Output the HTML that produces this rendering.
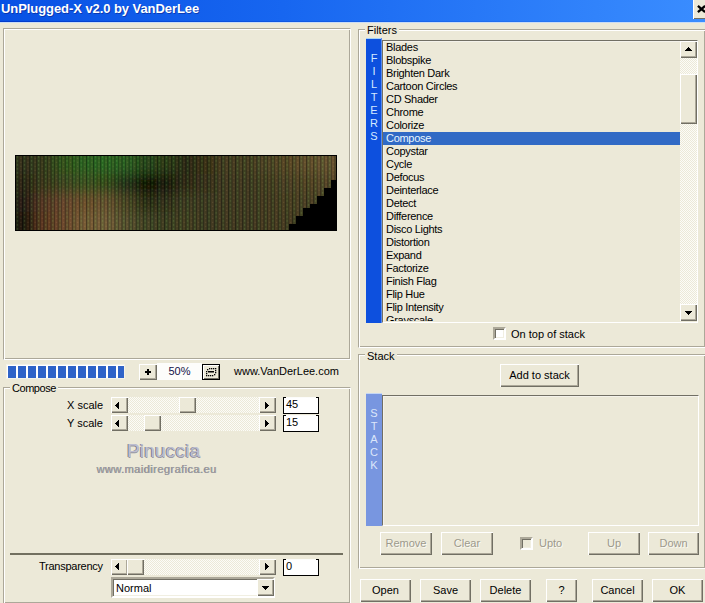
<!DOCTYPE html>
<html><head><meta charset="utf-8"><title>UnPlugged-X</title>
<style>
html,body{margin:0;padding:0}
body{width:705px;height:603px;overflow:hidden;position:relative;background:#ECE9D8;font-family:"Liberation Sans",sans-serif;font-size:11px;color:#000}
body div, body svg{position:absolute}
.t{white-space:nowrap;line-height:13px;font-size:11px}
.tt{white-space:nowrap;font-weight:bold;font-size:13px;line-height:16px;color:#fff;text-shadow:1px 1px rgba(10,30,130,.55)}
.etch{border:1px solid;border-color:#ACA899 #fff #fff #ACA899;box-shadow:inset 1px 1px #fff, inset -1px -1px #ACA899}
.btn{box-sizing:border-box;background:#ECE9D8;box-shadow:inset 1px 1px #fff, inset -1px -1px #716F64, inset -2px -2px #ACA899;text-align:center;white-space:nowrap;font-size:11px}
.lf{border:1px solid;border-color:#716F64 #fff #fff #716F64;box-shadow:inset 1px 1px #F4F2EA}
.sunk{border:2px solid;border-color:#ACA899 #fff #fff #ACA899;box-shadow:inset 1px 1px #716F64, inset -1px -1px #F1EFE2}
.dis{color:#9C998C;text-shadow:1px 1px #FAF9F3}
</style></head><body>
<div style="left:0;top:0;width:705px;height:22px;background:linear-gradient(90deg,#0851E4 0%,#1766F0 40%,#3A8DFF 100%)"></div>
<div style="left:0;top:21px;width:705px;height:1px;background:linear-gradient(90deg,rgba(0,50,190,.7),rgba(0,60,200,.35) 40%,rgba(40,120,240,0))"></div>
<div style="left:0;top:22px;width:705px;height:1px;background:#C9DCF5"></div>
<div class="tt" style="left:1px;top:1px;letter-spacing:-0.07px">UnPlugged-X v2.0 by VanDerLee</div>
<div style="left:693px;top:0;width:12px;height:19px;background:#ECE9D8;box-shadow:inset 1px 0 #fff, inset 0 -1px #716F64"></div>
<svg style="left:697px;top:5px;width:9px;height:8px" viewBox="0 0 9 8"><path d="M0.9 0.9 L8.1 7.1 M8.1 0.9 L0.9 7.1" stroke="#000" stroke-width="2.3"/></svg>
<div class="etch" style="left:3px;top:28px;width:346px;height:330px"></div>
<svg style="left:15px;top:155px;width:322px;height:76px" viewBox="0 0 322 76"><defs><filter id="b1" x="-20%" y="-50%" width="140%" height="200%"><feGaussianBlur stdDeviation="6"/></filter><pattern id="st" width="7.1" height="4" patternUnits="userSpaceOnUse">
<rect x="0" y="0" width="1.1" height="4" fill="#000" fill-opacity="0.4"/>
<rect x="1.1" y="0" width="2.4" height="4" fill="#2a6a20" fill-opacity="0.12"/>
<rect x="1.7" y="1.2" width="1.2" height="1.4" fill="#b0e080" fill-opacity="0.18"/>
<rect x="3.5" y="0" width="0.9" height="4" fill="#000" fill-opacity="0.3"/>
<rect x="4.4" y="0" width="2.7" height="4" fill="#7a3a1a" fill-opacity="0.1"/>
<rect x="5.3" y="2.8" width="1.2" height="1.2" fill="#ffd0a0" fill-opacity="0.1"/>
</pattern></defs><g filter="url(#b1)"><rect x="-30.0" y="-30.0" width="50.6" height="49.5" fill="#32321a"/><rect x="20.1" y="-30.0" width="20.6" height="49.5" fill="#363e1c"/><rect x="40.2" y="-30.0" width="20.6" height="49.5" fill="#305a1e"/><rect x="60.4" y="-30.0" width="20.6" height="49.5" fill="#2c6620"/><rect x="80.5" y="-30.0" width="20.6" height="49.5" fill="#2c6a20"/><rect x="100.6" y="-30.0" width="20.6" height="49.5" fill="#2a6420"/><rect x="120.8" y="-30.0" width="20.6" height="49.5" fill="#284a1a"/><rect x="140.9" y="-30.0" width="20.6" height="49.5" fill="#2a3e16"/><rect x="161.0" y="-30.0" width="20.6" height="49.5" fill="#2a2c14"/><rect x="181.1" y="-30.0" width="20.6" height="49.5" fill="#393316"/><rect x="201.2" y="-30.0" width="20.6" height="49.5" fill="#443d21"/><rect x="221.4" y="-30.0" width="20.6" height="49.5" fill="#454124"/><rect x="241.5" y="-30.0" width="20.6" height="49.5" fill="#4f4626"/><rect x="261.6" y="-30.0" width="20.6" height="49.5" fill="#584a28"/><rect x="281.8" y="-30.0" width="20.6" height="49.5" fill="#63522e"/><rect x="301.9" y="-30.0" width="50.6" height="49.5" fill="#685631"/><rect x="-30.0" y="19.0" width="50.6" height="19.5" fill="#2a2614"/><rect x="20.1" y="19.0" width="20.6" height="19.5" fill="#3a3a1e"/><rect x="40.2" y="19.0" width="20.6" height="19.5" fill="#3e4a20"/><rect x="60.4" y="19.0" width="20.6" height="19.5" fill="#3a5420"/><rect x="80.5" y="19.0" width="20.6" height="19.5" fill="#34501e"/><rect x="100.6" y="19.0" width="20.6" height="19.5" fill="#22321a"/><rect x="120.8" y="19.0" width="20.6" height="19.5" fill="#0c0a04"/><rect x="140.9" y="19.0" width="20.6" height="19.5" fill="#16160a"/><rect x="161.0" y="19.0" width="20.6" height="19.5" fill="#2e2a16"/><rect x="181.1" y="19.0" width="20.6" height="19.5" fill="#37331d"/><rect x="201.2" y="19.0" width="20.6" height="19.5" fill="#403b21"/><rect x="221.4" y="19.0" width="20.6" height="19.5" fill="#403b21"/><rect x="241.5" y="19.0" width="20.6" height="19.5" fill="#453f22"/><rect x="261.6" y="19.0" width="20.6" height="19.5" fill="#4b4226"/><rect x="281.8" y="19.0" width="20.6" height="19.5" fill="#524628"/><rect x="301.9" y="19.0" width="50.6" height="19.5" fill="#564a2a"/><rect x="-30.0" y="38.0" width="50.6" height="19.5" fill="#261e12"/><rect x="20.1" y="38.0" width="20.6" height="19.5" fill="#5a3a26"/><rect x="40.2" y="38.0" width="20.6" height="19.5" fill="#6a4a2e"/><rect x="60.4" y="38.0" width="20.6" height="19.5" fill="#70522e"/><rect x="80.5" y="38.0" width="20.6" height="19.5" fill="#6a5430"/><rect x="100.6" y="38.0" width="20.6" height="19.5" fill="#4e4a28"/><rect x="120.8" y="38.0" width="20.6" height="19.5" fill="#2c2e18"/><rect x="140.9" y="38.0" width="20.6" height="19.5" fill="#30321a"/><rect x="161.0" y="38.0" width="20.6" height="19.5" fill="#3e3c22"/><rect x="181.1" y="38.0" width="20.6" height="19.5" fill="#3e3b21"/><rect x="201.2" y="38.0" width="20.6" height="19.5" fill="#403b21"/><rect x="221.4" y="38.0" width="20.6" height="19.5" fill="#403b21"/><rect x="241.5" y="38.0" width="20.6" height="19.5" fill="#443d22"/><rect x="261.6" y="38.0" width="20.6" height="19.5" fill="#474124"/><rect x="281.8" y="38.0" width="20.6" height="19.5" fill="#4b4226"/><rect x="301.9" y="38.0" width="50.6" height="19.5" fill="#4b4226"/><rect x="-30.0" y="57.0" width="50.6" height="49.5" fill="#1c160e"/><rect x="20.1" y="57.0" width="20.6" height="49.5" fill="#5e3a24"/><rect x="40.2" y="57.0" width="20.6" height="49.5" fill="#6e4c2e"/><rect x="60.4" y="57.0" width="20.6" height="49.5" fill="#7a6038"/><rect x="80.5" y="57.0" width="20.6" height="49.5" fill="#76623a"/><rect x="100.6" y="57.0" width="20.6" height="49.5" fill="#5a5430"/><rect x="120.8" y="57.0" width="20.6" height="49.5" fill="#424426"/><rect x="140.9" y="57.0" width="20.6" height="49.5" fill="#3e4024"/><rect x="161.0" y="57.0" width="20.6" height="49.5" fill="#424024"/><rect x="181.1" y="57.0" width="20.6" height="49.5" fill="#3e3b21"/><rect x="201.2" y="57.0" width="20.6" height="49.5" fill="#403b21"/><rect x="221.4" y="57.0" width="20.6" height="49.5" fill="#403b21"/><rect x="241.5" y="57.0" width="20.6" height="49.5" fill="#443d22"/><rect x="261.6" y="57.0" width="20.6" height="49.5" fill="#443d22"/><rect x="281.8" y="57.0" width="20.6" height="49.5" fill="#443d22"/><rect x="301.9" y="57.0" width="50.6" height="49.5" fill="#443d22"/></g><rect x="0" y="0" width="322" height="76" fill="url(#st)"/><polygon points="274,75 274,69 281,69 281,61 288,61 288,53 295,53 295,49 302,49 302,41 309,41 309,33 316,33 316,25 321,25 321,75" fill="#000"/><rect x="0.5" y="0.5" width="321" height="75" fill="none" stroke="#000"/></svg>
<div style="left:6px;top:364px;width:119px;height:15px;background:#fff;box-shadow:inset 0 0 0 1px #F4F2E8"></div>
<div style="left:8px;top:366px;width:8px;height:12px;background:#2F63C8"></div>
<div style="left:18px;top:366px;width:8px;height:12px;background:#2F63C8"></div>
<div style="left:28px;top:366px;width:8px;height:12px;background:#2F63C8"></div>
<div style="left:38px;top:366px;width:8px;height:12px;background:#2F63C8"></div>
<div style="left:48px;top:366px;width:8px;height:12px;background:#2F63C8"></div>
<div style="left:58px;top:366px;width:8px;height:12px;background:#2F63C8"></div>
<div style="left:68px;top:366px;width:8px;height:12px;background:#2F63C8"></div>
<div style="left:78px;top:366px;width:8px;height:12px;background:#2F63C8"></div>
<div style="left:88px;top:366px;width:8px;height:12px;background:#2F63C8"></div>
<div style="left:98px;top:366px;width:8px;height:12px;background:#2F63C8"></div>
<div style="left:108px;top:366px;width:8px;height:12px;background:#2F63C8"></div>
<div style="left:118px;top:366px;width:6px;height:12px;background:#2F63C8"></div>
<div class="btn" style="left:139px;top:364px;width:18px;height:16px;line-height:16px;"></div>
<div style="left:145px;top:371px;width:6px;height:2px;background:#000"></div>
<div style="left:147px;top:369px;width:2px;height:6px;background:#000"></div>
<div style="left:157px;top:363px;width:45px;height:17px;background:#FDFDFB"></div>
<div class="t" style="left:157px;top:365px;width:45px;text-align:center;color:#121248">50%</div>
<div style="left:202px;top:364px;width:18px;height:16px;box-sizing:border-box;border:1px solid #000;background:#ECE9D8;box-shadow:inset 1px 1px #fff, inset -1px -1px #716F64"></div>
<svg style="left:202px;top:364px;width:18px;height:16px" viewBox="0 0 18 16"><g fill="#000"><rect x="7" y="4" width="1.3" height="1.3"/><rect x="9" y="4" width="1.3" height="1.3"/><rect x="11" y="4" width="1.3" height="1.3"/><rect x="13" y="4" width="1.3" height="1.3"/><rect x="5" y="5" width="1.3" height="1.3"/><rect x="4" y="7" width="1.3" height="1.3"/><rect x="4" y="9" width="1.3" height="1.3"/><rect x="4" y="11" width="1.3" height="1.3"/><rect x="6" y="11" width="1.3" height="1.3"/><rect x="8" y="11" width="1.3" height="1.3"/><rect x="10" y="11" width="1.3" height="1.3"/><rect x="12" y="10" width="1.3" height="1.3"/><rect x="13" y="6" width="1.3" height="1.3"/><rect x="13" y="8" width="1.3" height="1.3"/><rect x="6" y="7" width="6" height="1.5"/></g></svg>
<div class="t" style="left:234px;top:365px;">www.VanDerLee.com</div>
<div class="etch" style="left:3px;top:387px;width:346px;height:215px"></div>
<div class="t" style="left:10px;top:382px;padding:0 2px;background:#ECE9D8;letter-spacing:-0.45px">Compose</div>
<div class="t" style="left:67px;top:399px;">X scale</div>
<div class="t" style="left:67px;top:417px;">Y scale</div>
<div style="left:128px;top:397px;width:131px;height:16px;background-color:#F5F4EE;background-image:repeating-conic-gradient(#ECE9D8 0 25%, #FCFCF8 0 50%);background-size:2px 2px"></div>
<div class="btn" style="left:111px;top:397px;width:17px;height:16px;line-height:16px;"></div>
<svg style="left:115px;top:402px;width:4px;height:7px" viewBox="0 0 4 7" shape-rendering="crispEdges"><g fill="#000"><rect x="0" y="3" width="1" height="1"/><rect x="1" y="2" width="1" height="3"/><rect x="2" y="1" width="1" height="5"/><rect x="3" y="0" width="1" height="7"/></g></svg>
<div class="btn" style="left:259px;top:397px;width:17px;height:16px;line-height:16px;"></div>
<svg style="left:265px;top:402px;width:4px;height:7px" viewBox="0 0 4 7" shape-rendering="crispEdges"><g fill="#000"><rect x="3" y="3" width="1" height="1"/><rect x="2" y="2" width="1" height="3"/><rect x="1" y="1" width="1" height="5"/><rect x="0" y="0" width="1" height="7"/></g></svg>
<div class="btn" style="left:179px;top:397px;width:17px;height:16px;line-height:16px;"></div>
<div style="left:283px;top:397px;width:34px;height:15px;border:1px solid #000;border-top:1px solid #FCFCFA;background:#fff"></div>
<div style="left:283px;top:397px;width:3px;height:1px;background:#000"></div>
<div style="left:316px;top:397px;width:3px;height:1px;background:#000"></div>
<div class="t" style="left:286px;top:398px">45</div>
<div style="left:128px;top:415px;width:131px;height:16px;background-color:#F5F4EE;background-image:repeating-conic-gradient(#ECE9D8 0 25%, #FCFCF8 0 50%);background-size:2px 2px"></div>
<div class="btn" style="left:111px;top:415px;width:17px;height:16px;line-height:16px;"></div>
<svg style="left:115px;top:420px;width:4px;height:7px" viewBox="0 0 4 7" shape-rendering="crispEdges"><g fill="#000"><rect x="0" y="3" width="1" height="1"/><rect x="1" y="2" width="1" height="3"/><rect x="2" y="1" width="1" height="5"/><rect x="3" y="0" width="1" height="7"/></g></svg>
<div class="btn" style="left:259px;top:415px;width:17px;height:16px;line-height:16px;"></div>
<svg style="left:265px;top:420px;width:4px;height:7px" viewBox="0 0 4 7" shape-rendering="crispEdges"><g fill="#000"><rect x="3" y="3" width="1" height="1"/><rect x="2" y="2" width="1" height="3"/><rect x="1" y="1" width="1" height="5"/><rect x="0" y="0" width="1" height="7"/></g></svg>
<div class="btn" style="left:144px;top:415px;width:17px;height:16px;line-height:16px;"></div>
<div style="left:283px;top:415px;width:34px;height:15px;border:1px solid #000;border-top:1px solid #FCFCFA;background:#fff"></div>
<div style="left:283px;top:415px;width:3px;height:1px;background:#000"></div>
<div style="left:316px;top:415px;width:3px;height:1px;background:#000"></div>
<div class="t" style="left:286px;top:416px">15</div>
<div class="t" style="left:127px;top:440px;font-size:19px;line-height:22px;letter-spacing:0.2px;color:#BDBDD0;text-shadow:-1px 0 #7E7E88, 0 0.5px #9A9AA4">Pinuccia</div>
<div class="t" style="left:97px;top:463px;font-size:11px;line-height:13px;letter-spacing:0.45px;color:#A2A2A6;text-shadow:-0.6px 0.4px #7A7A80">www.maidiregrafica.eu</div>
<div style="left:10px;top:553px;width:333px;height:2px;background:#727060"></div>
<div class="t" style="left:39px;top:560px;letter-spacing:-0.25px">Transparency</div>
<div style="left:128px;top:559px;width:131px;height:16px;background-color:#F5F4EE;background-image:repeating-conic-gradient(#ECE9D8 0 25%, #FCFCF8 0 50%);background-size:2px 2px"></div>
<div class="btn" style="left:111px;top:559px;width:17px;height:16px;line-height:16px;"></div>
<svg style="left:115px;top:563px;width:4px;height:7px" viewBox="0 0 4 7" shape-rendering="crispEdges"><g fill="#000"><rect x="0" y="3" width="1" height="1"/><rect x="1" y="2" width="1" height="3"/><rect x="2" y="1" width="1" height="5"/><rect x="3" y="0" width="1" height="7"/></g></svg>
<div class="btn" style="left:127px;top:559px;width:17px;height:16px;line-height:16px;"></div>
<div class="btn" style="left:259px;top:559px;width:17px;height:16px;line-height:16px;"></div>
<svg style="left:265px;top:563px;width:4px;height:7px" viewBox="0 0 4 7" shape-rendering="crispEdges"><g fill="#000"><rect x="3" y="3" width="1" height="1"/><rect x="2" y="2" width="1" height="3"/><rect x="1" y="1" width="1" height="5"/><rect x="0" y="0" width="1" height="7"/></g></svg>
<div style="left:283px;top:559px;width:34px;height:15px;border:1px solid #000;border-top:1px solid #FCFCFA;background:#fff"></div>
<div style="left:283px;top:559px;width:3px;height:1px;background:#000"></div>
<div style="left:316px;top:559px;width:3px;height:1px;background:#000"></div>
<div class="t" style="left:286px;top:560px">0</div>
<div class="sunk" style="left:111px;top:577px;width:160px;height:17px;background:#fff"></div>
<div class="btn" style="left:257px;top:579px;width:17px;height:17px;line-height:17px;"></div>
<svg style="left:262px;top:586px;width:7px;height:4px" viewBox="0 0 7 4" shape-rendering="crispEdges"><g fill="#000"><rect x="3" y="3" width="1" height="1"/><rect x="2" y="2" width="3" height="1"/><rect x="1" y="1" width="5" height="1"/><rect x="0" y="0" width="7" height="1"/></g></svg>
<div class="t" style="left:116px;top:582px;">Normal</div>
<div class="etch" style="left:358px;top:29px;width:346px;height:317px"></div>
<div class="t" style="left:365px;top:24px;padding:0 2px;background:#ECE9D8">Filters</div>
<div style="left:366px;top:38px;width:16px;height:285px;background:#0D50DE;box-shadow:inset -1px 0 #5A8CEB, inset 0 1px #A6D2F6"></div>
<div class="t" style="left:366px;top:52px;width:16px;text-align:center;color:#D4EAFF">F</div>
<div class="t" style="left:366px;top:65px;width:16px;text-align:center;color:#D4EAFF">I</div>
<div class="t" style="left:366px;top:78px;width:16px;text-align:center;color:#D4EAFF">L</div>
<div class="t" style="left:366px;top:91px;width:16px;text-align:center;color:#D4EAFF">T</div>
<div class="t" style="left:366px;top:104px;width:16px;text-align:center;color:#D4EAFF">E</div>
<div class="t" style="left:366px;top:117px;width:16px;text-align:center;color:#D4EAFF">R</div>
<div class="t" style="left:366px;top:130px;width:16px;text-align:center;color:#D4EAFF">S</div>
<div class="lf" style="left:382px;top:40px;width:314px;height:281px"></div>
<div style="left:383px;top:41px;width:297px;height:280px;overflow:hidden;letter-spacing:-0.3px"><div class="t" style="left:3px;top:0px">Blades</div><div class="t" style="left:3px;top:13px">Blobspike</div><div class="t" style="left:3px;top:26px">Brighten Dark</div><div class="t" style="left:3px;top:39px">Cartoon Circles</div><div class="t" style="left:3px;top:52px">CD Shader</div><div class="t" style="left:3px;top:65px">Chrome</div><div class="t" style="left:3px;top:78px">Colorize</div><div class="t" style="left:0px;top:91px;width:294px;height:13px;background:#316AC5;color:#E8F6FF;padding-left:3px">Compose</div><div class="t" style="left:3px;top:104px">Copystar</div><div class="t" style="left:3px;top:117px">Cycle</div><div class="t" style="left:3px;top:130px">Defocus</div><div class="t" style="left:3px;top:143px">Deinterlace</div><div class="t" style="left:3px;top:156px">Detect</div><div class="t" style="left:3px;top:169px">Difference</div><div class="t" style="left:3px;top:182px">Disco Lights</div><div class="t" style="left:3px;top:195px">Distortion</div><div class="t" style="left:3px;top:208px">Expand</div><div class="t" style="left:3px;top:221px">Factorize</div><div class="t" style="left:3px;top:234px">Finish Flag</div><div class="t" style="left:3px;top:247px">Flip Hue</div><div class="t" style="left:3px;top:260px">Flip Intensity</div><div class="t" style="left:3px;top:273px">Grayscale</div></div>
<div style="left:680px;top:41px;width:17px;height:280px;background-color:#F5F4EE;background-image:repeating-conic-gradient(#ECE9D8 0 25%, #FCFCF8 0 50%);background-size:2px 2px"></div>
<div class="btn" style="left:680px;top:41px;width:17px;height:17px;line-height:17px;"></div>
<svg style="left:685px;top:47px;width:7px;height:4px" viewBox="0 0 7 4" shape-rendering="crispEdges"><g fill="#000"><rect x="3" y="0" width="1" height="1"/><rect x="2" y="1" width="3" height="1"/><rect x="1" y="2" width="5" height="1"/><rect x="0" y="3" width="7" height="1"/></g></svg>
<div class="btn" style="left:680px;top:74px;width:17px;height:50px;line-height:50px;"></div>
<div class="btn" style="left:680px;top:304px;width:17px;height:17px;line-height:17px;"></div>
<svg style="left:685px;top:311px;width:7px;height:4px" viewBox="0 0 7 4" shape-rendering="crispEdges"><g fill="#000"><rect x="3" y="3" width="1" height="1"/><rect x="2" y="2" width="3" height="1"/><rect x="1" y="1" width="5" height="1"/><rect x="0" y="0" width="7" height="1"/></g></svg>
<div class="sunk" style="left:493px;top:327px;width:9px;height:9px;background:#fff"></div>
<div class="t" style="left:511px;top:328px;">On top of stack</div>
<div class="etch" style="left:358px;top:354px;width:346px;height:213px"></div>
<div class="t" style="left:365px;top:350px;padding:0 2px;background:#ECE9D8">Stack</div>
<div class="btn" style="left:500px;top:364px;width:79px;height:23px;line-height:23px;"><span class="">Add to stack</span></div>
<div style="left:366px;top:393px;width:16px;height:133px;background:#7896E0;box-shadow:inset 0 1px #C4D6F4"></div>
<div class="t" style="left:366px;top:407px;width:16px;text-align:center;color:#DCE6FA">S</div>
<div class="t" style="left:366px;top:420px;width:16px;text-align:center;color:#DCE6FA">T</div>
<div class="t" style="left:366px;top:433px;width:16px;text-align:center;color:#DCE6FA">A</div>
<div class="t" style="left:366px;top:446px;width:16px;text-align:center;color:#DCE6FA">C</div>
<div class="t" style="left:366px;top:459px;width:16px;text-align:center;color:#DCE6FA">K</div>
<div class="lf" style="left:382px;top:395px;width:315px;height:129px"></div>
<div class="btn" style="left:380px;top:532px;width:52px;height:23px;line-height:23px;"><span class="dis">Remove</span></div>
<div class="btn" style="left:441px;top:532px;width:52px;height:23px;line-height:23px;"><span class="dis">Clear</span></div>
<div class="sunk" style="left:520px;top:537px;width:9px;height:9px;background:#ECE9D8"></div>
<div class="t dis" style="left:539px;top:537px">Upto</div>
<div class="btn" style="left:588px;top:532px;width:52px;height:23px;line-height:23px;"><span class="dis">Up</span></div>
<div class="btn" style="left:648px;top:532px;width:51px;height:23px;line-height:23px;"><span class="dis">Down</span></div>
<div class="btn" style="left:360px;top:579px;width:51px;height:23px;line-height:23px;"><span class="">Open</span></div>
<div class="btn" style="left:420px;top:579px;width:51px;height:23px;line-height:23px;"><span class="">Save</span></div>
<div class="btn" style="left:480px;top:579px;width:51px;height:23px;line-height:23px;"><span class="">Delete</span></div>
<div class="btn" style="left:546px;top:579px;width:31px;height:23px;line-height:23px;"><span class="">?</span></div>
<div class="btn" style="left:592px;top:579px;width:51px;height:23px;line-height:23px;"><span class="">Cancel</span></div>
<div class="btn" style="left:652px;top:579px;width:51px;height:23px;line-height:23px;"><span class="">OK</span></div>
</body></html>
